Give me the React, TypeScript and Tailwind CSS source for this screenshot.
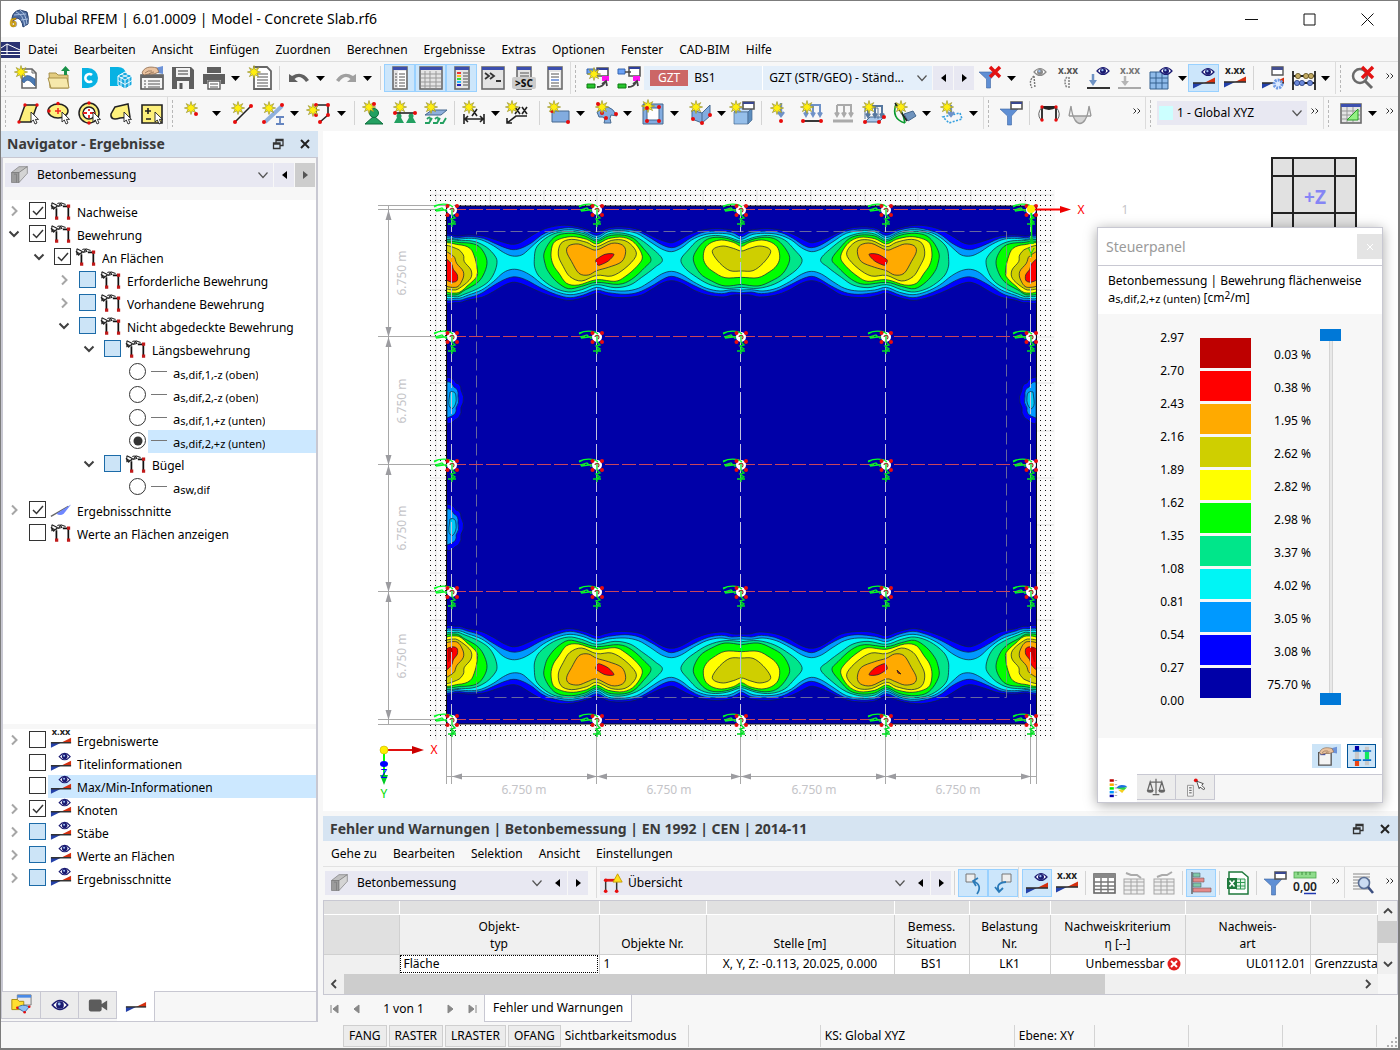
import { ReactNode } from 'react';
import { clsx } from 'clsx';

/* ---------- icon parts ---------- */

const Star = ({ x = 6, y = 6 }) => (
  <path
    transform={`translate(${x} ${y})`}
    d="M0-6.5 1.2-2.4 4.8-4.4 2.8-1 6.6 0 2.8 1.2 4.6 4.6 1.2 2.8 0 6.5-1.2 2.8-4.6 4.6-2.8 1.2-6.6 0-2.8-1-4.8-4.4-1.2-2.4Z"
    fill="#ffee10"
    stroke="#9a9430"
    strokeWidth=".7"
  />
);

const Dot = ({ x, y, r = 2 }: { x: number; y: number; r?: number }) => (
  <circle cx={x} cy={y} r={r} fill="#e80c0c" />
);

const Cursor = ({ x = 15, y = 11 }) => (
  <path
    transform={`translate(${x} ${y})`}
    d="M0 0V10L2.3 8 4 12 6 11 4.4 7.4H7.5Z"
    fill="#fff"
    stroke="#222"
    strokeWidth=".9"
  />
);

const Eye = ({ x = 13, y = 5, color = '#1b1b72' }) => (
  <g transform={`translate(${x} ${y})`}>
    <path d="M-6 0Q0-7 6 0Q0 7-6 0Z" fill="#fff" stroke={color} strokeWidth="1.2" />
    <circle r="3" fill={color} />
    <circle cx="-.6" cy="-.8" r="1.1" fill="#9dc3f5" />
  </g>
);

const Wedge = ({ y = 0 }) => (
  <g transform={`translate(0 ${y})`}>
    <path d="M1 13H12L1 18.5Z" fill="#2340a8" />
    <path d="M23 7.5V13H12Z" fill="#d4300f" />
    <path d="M1 13H23" stroke="#333" strokeWidth="1.6" />
  </g>
);

const Values = ({ color = '#222', y = 8 }) => (
  <text x="12" y={y} textAnchor="middle" fontSize="10" fontWeight="700" fontFamily="Noto Sans, sans-serif" fill={color}>
    x.xx
  </text>
);

const Win = ({ x = 4, y = 1, w = 16, h = 22 }) => (
  <g>
    <rect x={x} y={y} width={w} height={h} fill="#e4e4e4" stroke="#6b6b6b" strokeWidth="1.6" />
    <rect x={x} y={y} width={w} height="3" fill="#3c4fae" />
  </g>
);

const Funnel = () => (
  <path d="M1 6H19L12.5 13V22H8.5V13Z" fill="#5f8fd4" stroke="#3d64a3" strokeWidth=".6" />
);

const Loads = ({ color = '#6f92c8', y = 0 }) => (
  <path
    transform={`translate(0 ${y})`}
    d="M6 4H21M6 4V14M13 4V14M20 4V14M4 11.5 6 15 8 11.5M11 11.5 13 15 15 11.5M18 11.5 20 15 22 11.5"
    fill="none"
    stroke={color}
    strokeWidth="2"
  />
);

const Lines = ({ x, y, w, n, color = '#555', gap = 3 }: { x: number; y: number; w: number; n: number; color?: string; gap?: number }) => (
  <path
    d={Array.from({ length: n }, (_, i) => `M${x} ${y + i * gap}h${w}`).join('')}
    stroke={color}
    strokeWidth="1.2"
  />
);

const Hand = ({ x = 0, y = 0 }) => (
  <g transform={`translate(${x} ${y})`}>
    <path d="M15 2 23 0V8L18 7Z" fill="#6d93d8" />
    <path d="M2 7C4 1 10 0 17 2L19 6Q14 9 9 8L4 9Z" fill="#eac3a0" stroke="#8c6b50" strokeWidth=".8" />
    <path d="M5 7Q8 4 12 5M9 8Q11 6 14 6" fill="none" stroke="#8c6b50" strokeWidth=".8" />
  </g>
);

const DimGrid = () => (
  <g stroke="#a5a5a5" fill="#efefef">
    <rect x="2" y="8" width="20" height="15" />
    <path d="M2 11H22M2 15H22M2 19H22M9 8V23M15 8V23" />
  </g>
);

const icons: Record<string, ReactNode> = {
  newModel: (
    <>
      <path d="M6 3H16L20 7V22H6Z" fill="#fff" stroke="#666" strokeWidth="1.6" />
      <path d="M16 3V7H20" fill="none" stroke="#666" />
      <path d="M6 15Q8 8 14 10L19 13V20L15 16Q11 12 8 17Z" fill="#4a7bb5" stroke="#2c5387" strokeWidth=".6" />
      <Star x={5} y={6} />
    </>
  ),
  open: (
    <>
      <path d="M2 7H9L11 9H21V22H3Z" fill="#e3cc80" stroke="#a8914a" />
      <path d="M1 12H20L22 22H4Z" fill="#f6e8ab" stroke="#a8914a" />
      <path d="M17 9V5H14L18.5 0 23 5H20V9Z" fill="#189048" />
    </>
  ),
  dlubal: (
    <>
      <path d="M4 2H10A10 10 0 0 1 10 22H4Z" fill="#08b2e3" />
      <path d="M14 9A4 4 0 1 0 14 15" fill="none" stroke="#fff" strokeWidth="2.6" />
    </>
  ),
  cloudModel: (
    <>
      <path d="M1 1H9Q16 1 17 8L12 20H1Z" fill="#08b2e3" />
      <path d="M9 10 16 6 23 10V19L16 23 9 19Z" fill="#19a9df" stroke="#fff" />
      <path d="M9 10 16 14 23 10M16 14V23M12 8 20 12V21M20 8 12 12V21M9 14.5 16 18.5 23 14.5" stroke="#fff" fill="none" strokeWidth=".9" />
    </>
  ),
  manager: (
    <>
      <path d="M1 9H23V23H1Z" fill="#f5f5f5" stroke="#555" strokeWidth="1.6" />
      <path d="M1 9H23V12H1Z" fill="#666" />
      <Lines x={8} y={15} w={12} n={3} />
      <Lines x={4} y={15} w={2} n={3} />
      <Hand />
    </>
  ),
  save: (
    <>
      <path d="M1 1H20L23 4V23H1Z" fill="#5f5f5f" />
      <path d="M5 2H19V11H5ZM6 15H18V23H6Z" fill="#f2f2f2" />
      <path d="M7 5H17M7 8H17" stroke="#777" strokeWidth="1.4" />
      <path d="M10 17V23" stroke="#555" strokeWidth="3" />
    </>
  ),
  print: (
    <>
      <path d="M5 1H19V7H5ZM1 8H23V18H19V14H5V18H1Z" fill="#5f5f5f" />
      <path d="M6 15H18V23H6Z" fill="#fff" stroke="#5f5f5f" strokeWidth="1.4" />
      <Lines x={8} y={18} w={8} n={2} />
    </>
  ),
  report: (
    <>
      <path d="M5 1H18L22 5V23H5Z" fill="#fff" stroke="#666" strokeWidth="1.8" />
      <Lines x={8} y={8} w={11} n={5} />
      <Star x={5} y={6} />
    </>
  ),
  undo: <path d="M2 8V16H11L7.5 13Q13 8 19 16L22 14Q15 4 5 10Z" fill="#606060" />,
  redo: <path d="M22 8V16H13L16.5 13Q11 8 5 16L2 14Q9 4 19 10Z" fill="#a0a0a0" />,
  panelList: (
    <>
      <Win x={5} w={14} />
      <rect x="10" y="5" width="8" height="17" fill="#fff" />
      <Lines x={11} y={8} w={6} n={5} />
      <Lines x={7} y={8} w={2} n={5} />
    </>
  ),
  panelTable: (
    <>
      <Win x={1} w={22} />
      <path d="M2 8H22M2 12H22M2 16H22M2 20H22M6 5V22M11 5V22M17 5V22" stroke="#999" />
    </>
  ),
  panelColors: (
    <>
      <Win x={5} w={14} />
      <path d="M7 7H11" stroke="#e33" strokeWidth="2" />
      <path d="M7 10H11" stroke="#fb2" strokeWidth="2" />
      <path d="M7 13H11" stroke="#3d3" strokeWidth="2" />
      <path d="M7 16H11" stroke="#2bf" strokeWidth="2" />
      <path d="M7 19H11" stroke="#22b" strokeWidth="2" />
      <Lines x={13} y={7} w={5} n={5} />
    </>
  ),
  console: (
    <>
      <Win x={1} w={22} />
      <path d="M4 7 8 10 4 13M9 7 13 10 9 13M15 15H20" fill="none" stroke="#333" strokeWidth="1.8" />
    </>
  ),
  script: (
    <>
      <Win x={5} w={14} />
      <Lines x={8} y={7} w={9} n={2} />
      <rect x="0" y="11" width="24" height="12" rx="2" fill="#ccc" />
      <text x="12" y="21" textAnchor="middle" fontSize="10" fontWeight="800" fontFamily="Noto Sans, sans-serif" fill="#111">
        &gt;SC
      </text>
    </>
  ),
  panelDoc: (
    <>
      <Win x={5} w={14} />
      <rect x="7" y="6" width="10" height="15" fill="#fff" />
      <Lines x={8} y={8} w={8} n={2} />
      <Lines x={8} y={14} w={8} n={1} color="#36c" />
      <Lines x={8} y={17} w={8} n={2} />
    </>
  ),
  lcNew: (
    <>
      <path d="M11 2H22V10H11Z" fill="#fff" stroke="#555" strokeWidth="1.6" />
      <path d="M11 2H22V4H11Z" fill="#2f3f9a" />
      <path d="M1 3H9V8H1Z" fill="#6aa1f5" stroke="#3464b0" />
      <path d="M16 10H23V15H16Z" fill="#ff12ef" />
      <path d="M1 18H9V22H1Z" fill="#26c42b" stroke="#0c7b12" />
      <path d="M11 21Q17 21 19 16M16 18 20 15 21 20" fill="none" stroke="#444" strokeWidth="1.8" />
      <Star x={8} y={8} />
    </>
  ),
  lcEdit: (
    <>
      <path d="M12 1H23V10H12Z" fill="#fff" stroke="#555" strokeWidth="1.6" />
      <path d="M12 1H23V3H12Z" fill="#2f3f9a" />
      <path d="M1 3H8V8H1Z" fill="#6aa1f5" stroke="#3464b0" />
      <path d="M8 6H14" stroke="#444" strokeWidth="1.5" />
      <path d="M16 10H23V15H16Z" fill="#ff12ef" />
      <path d="M1 18H9V22H1Z" fill="#26c42b" stroke="#0c7b12" />
      <path d="M11 21Q17 21 19 16M16 18 20 15 21 20" fill="none" stroke="#444" strokeWidth="1.8" />
    </>
  ),
  filterOff: (
    <>
      <Funnel />
      <path d="M12 1 22 11M22 1 12 11" stroke="#e31212" strokeWidth="3.4" />
    </>
  ),
  eyeDim: (
    <>
      <Eye x={15} y={6} color="#8a8a8a" />
      <path d="M9 10Q3 15 7 22M9 10 10 22" fill="none" stroke="#777" strokeWidth="1.4" strokeDasharray="2 1" />
    </>
  ),
  valDim: (
    <>
      <Values color="#555" />
      <path d="M11 11Q7 15 11 22M13 11V23" fill="none" stroke="#888" strokeWidth="1.6" strokeDasharray="2 1" />
    </>
  ),
  loadEye: (
    <>
      <Eye x={16} y={5} />
      <path d="M6 8V15" stroke="#6f93c4" strokeWidth="2.5" />
      <path d="M2 14H10L6 20Z" fill="#6f93c4" />
      <path d="M0 22H23" stroke="#333" strokeWidth="2" />
    </>
  ),
  loadVal: (
    <>
      <Values color="#777" />
      <path d="M7 10V16" stroke="#b5b5b5" strokeWidth="2.5" />
      <path d="M3 15H11L7 20Z" fill="#b5b5b5" />
      <path d="M0 22H23" stroke="#aaa" strokeWidth="2" />
    </>
  ),
  gridEye: (
    <>
      <path d="M1 6H19V23H1Z" fill="#8fbbea" stroke="#35618f" />
      <path d="M1 12H19M1 17H19M7 6V23M13 6V23" stroke="#35618f" />
      <Eye x={17} y={5} />
    </>
  ),
  resultEye: (
    <>
      <Eye x={16} y={6} />
      <Wedge y={4} />
    </>
  ),
  resultVal: (
    <>
      <Values />
      <Wedge y={3} />
    </>
  ),
  resultGear: (
    <>
      <Wedge y={4} />
      <path d="M11 1H22V9H11Z" fill="#fff" stroke="#555" strokeWidth="1.4" />
      <path d="M11 1H22V4H11Z" fill="#444f90" />
      <circle cx="17" cy="18" r="4" fill="#dceaff" stroke="#6f9be6" strokeWidth="3" strokeDasharray="2 1" />
    </>
  ),
  abacus: (
    <>
      <path d="M1 5V24M23 5V24M1 10H23M1 17H23" stroke="#222" strokeWidth="1.8" />
      <g fill="#c2aa62" stroke="#5a4b1c" strokeWidth=".8">
        <circle cx="6" cy="10" r="2.6" />
        <circle cx="14" cy="10" r="2.6" />
        <circle cx="19" cy="10" r="2.6" />
      </g>
      <g fill="#6a88d8" stroke="#2a3f80" strokeWidth=".8">
        <circle cx="5" cy="17" r="2.6" />
        <circle cx="10" cy="17" r="2.6" />
        <circle cx="18" cy="17" r="2.6" />
      </g>
    </>
  ),
  searchOff: (
    <>
      <circle cx="9" cy="10" r="7" fill="none" stroke="#6a6a6a" strokeWidth="2.5" />
      <path d="M14 15 21 22" stroke="#6a6a6a" strokeWidth="3" />
      <path d="M11 1 22 12M22 1 11 12" stroke="#e31212" strokeWidth="3.4" />
    </>
  ),
  selRect: (
    <>
      <path d="M9 4H21L15 21H3Z" fill="#fdf07c" stroke="#222" strokeWidth="1.5" />
      <Dot x={9} y={4} r={1.7} />
      <Dot x={21} y={4} r={1.7} />
      <Dot x={3} y={21} r={1.7} />
      <Cursor />
    </>
  ),
  selEllipse: (
    <>
      <ellipse cx="11" cy="10" rx="10" ry="7" fill="#fdf07c" stroke="#222" strokeWidth="1.5" />
      <Dot x={11} y={2.5} r={1.7} />
      <Dot x={2} y={10} r={1.7} />
      <path d="M8 10H14M11 7V13" stroke="#e22" strokeWidth="1.5" />
      <Cursor />
    </>
  ),
  selRing: (
    <>
      <circle cx="11" cy="12" r="10" fill="#fdf07c" stroke="#222" strokeWidth="1.5" />
      <circle cx="11" cy="12" r="6" fill="#fff" stroke="#222" strokeWidth="1.5" />
      <path d="M5 12H9M12 12H17M11 8V10M11 14V17" stroke="#e22" strokeWidth="1.8" />
      <Dot x={11} y={2} r={1.7} />
      <Dot x={11} y={22} r={1.7} />
      <Cursor />
    </>
  ),
  selPoly: (
    <>
      <path d="M6 6 19 3 21 16 11 17Q1 20 2 13Z" fill="#fdf07c" stroke="#222" strokeWidth="1.5" />
      <Cursor />
    </>
  ),
  selPlus: (
    <>
      <path d="M2 4H22V22H2Z" fill="#fdf07c" stroke="#222" strokeWidth="1.6" />
      <path d="M5 10H11M8 7V13M6 18H11" stroke="#222" strokeWidth="1.6" />
      <Cursor />
    </>
  ),
  node: (
    <>
      <Star x={8} y={7} />
      <Dot x={13} y={13} />
    </>
  ),
  line: (
    <>
      <path d="M5 21 21 5" stroke="#222" strokeWidth="1.6" />
      <Dot x={5} y={21} />
      <Dot x={21} y={5} />
      <Star x={8} y={7} />
    </>
  ),
  member: (
    <>
      <path d="M4 21 21 5" stroke="#8fb0dd" strokeWidth="4" />
      <Dot x={3} y={21} />
      <Dot x={21} y={4} />
      <path d="M15 16H23M15 23H23M19 16V23" stroke="#6585c0" strokeWidth="1.8" />
      <Star x={8} y={7} />
    </>
  ),
  polyline: (
    <>
      <path d="M8 14V4H20V14L12 21" fill="none" stroke="#222" strokeWidth="1.6" />
      <Dot x={8} y={4} />
      <Dot x={20} y={4} />
      <Dot x={8} y={14} />
      <Dot x={20} y={14} />
      <Dot x={12} y={21} />
      <Star x={5} y={9} />
    </>
  ),
  support: (
    <>
      <path d="M12 15 21 23H3Z" fill="#23a061" stroke="#0d6e3c" />
      <circle cx="12" cy="12" r="4.5" fill="#23a061" stroke="#0d6e3c" />
      <Star x={7} y={6} />
      <Dot x={12} y={3} />
    </>
  ),
  lineSupport: (
    <>
      <path d="M6 13 11 22H1ZM18 13 23 22H13Z" fill="#23a061" />
      <circle cx="6" cy="15" r="2.5" fill="#23a061" />
      <circle cx="18" cy="15" r="2.5" fill="#23a061" />
      <Star x={7} y={6} />
      <path d="M1 12H23" stroke="#222" strokeWidth="1.6" />
      <Dot x={2} y={12} />
      <Dot x={22} y={12} />
    </>
  ),
  surfSupport: (
    <>
      <path d="M1 22H5L8 17M9 22H13L16 17M16 22H19L22 17M3 18Q7 14 6 20M11 18Q15 14 14 20" fill="none" stroke="#23a061" strokeWidth="1.8" />
      <path d="M1 14 8 9H23L17 14Z" fill="#8fb0dd" stroke="#46698f" />
      <Star x={7} y={6} />
    </>
  ),
  dimension: (
    <>
      <path d="M2 13V23M22 13V23M3 18H21M6 15 3 18 6 21M18 15 21 18 18 21M10 8 15 15M15 8 10 15" fill="none" stroke="#222" strokeWidth="1.6" />
      <Star x={7} y={6} />
    </>
  ),
  slope: (
    <>
      <path d="M22 15H11L2 22M2 17V22H7M10 6 15 13M15 6 10 13M17 6 22 13M22 6 17 13" fill="none" stroke="#222" strokeWidth="1.6" />
      <Star x={7} y={6} />
    </>
  ),
  surface: (
    <>
      <path d="M5 10H22V21H5Z" fill="#82ace0" stroke="#46698f" />
      <Dot x={5} y={10} />
      <Dot x={21} y={21} />
      <Star x={7} y={6} />
    </>
  ),
  curved: (
    <>
      <path d="M3 11Q15-1 23 15L17 14Q15 17 17 22H10Q13 15 5 16Z" fill="#82ace0" stroke="#46698f" />
      <Dot x={8} y={12} />
      <Dot x={22} y={13} />
      <Dot x={12} y={17} />
      <Star x={8} y={6} />
      <Dot x={4} y={3} />
    </>
  ),
  opening: (
    <>
      <path d="M2 3H22V23H2Z" fill="#82ace0" stroke="#46698f" />
      <path d="M6 7H18V19H6Z" fill="#fff" stroke="#46698f" />
      <Star x={7} y={5} />
      <Dot x={6} y={7} />
      <Dot x={18} y={6} />
      <Dot x={6} y={20} />
      <Dot x={18} y={20} />
    </>
  ),
  solid: (
    <>
      <path d="M4 9 14 12 22 4V15L14 22 4 18Z" fill="#82ace0" stroke="#46698f" />
      <path d="M14 12V22" stroke="#46698f" />
      <Dot x={5} y={18} />
      <Dot x={14} y={22} />
      <Dot x={22} y={14} />
      <Star x={8} y={6} />
    </>
  ),
  cube: (
    <>
      <g stroke="#46698f" strokeWidth=".7">
        <path d="M3 11 7 7H21L17 11Z" fill="#c4defa" />
        <path d="M3 11H17V23H3Z" fill="#96bfea" />
        <path d="M17 11 21 7V19L17 23Z" fill="#5d8dbd" />
      </g>
      <path d="M12 1H23V8H12Z" fill="#fff" stroke="#555" strokeWidth="1.6" />
      <path d="M12 1H23V3H12Z" fill="#39478f" />
      <Star x={5} y={6} />
    </>
  ),
  nodeLoad: (
    <>
      <path d="M12 2V14M9 11 12 15 15 11" fill="none" stroke="#6f92c8" strokeWidth="2.4" />
      <Star x={8} y={7} />
      <Dot x={12} y={20} />
    </>
  ),
  lineLoad: (
    <>
      <Loads />
      <path d="M2 20H22" stroke="#222" strokeWidth="1.8" />
      <Dot x={3} y={20} />
      <Dot x={21} y={20} />
      <Star x={7} y={6} />
    </>
  ),
  lineLoadDim: (
    <>
      <Loads color="#aaa" />
      <path d="M2 20H22" stroke="#aaa" strokeWidth="3" />
    </>
  ),
  surfLoad: (
    <>
      <path d="M3 21 8 16H22L17 21Z" fill="#a9c8ec" stroke="#46698f" />
      <Loads y={1} color="#56779f" />
      <path d="M3 7V18M3 7H16V18" fill="none" stroke="#56779f" />
      <Dot x={3} y={21} />
      <Dot x={17} y={21} />
      <Dot x={22} y={16} />
      <Star x={7} y={6} />
    </>
  ),
  section: (
    <>
      <path d="M3 3Q-2 18 12 22M3 3Q10 10 12 22" fill="none" stroke="#0a9a2d" strokeWidth="1.7" />
      <path d="M11 13 20 10 23 15 15 20Z" fill="#6f93bd" stroke="#46698f" />
      <path d="M2 2 14 20" stroke="#222" strokeWidth="1.6" />
      <Star x={8} y={6} />
    </>
  ),
  freeLoad: (
    <>
      <path d="M3 16 20 12 22 18 9 22Z" fill="none" stroke="#35a0e0" strokeWidth="1.6" strokeDasharray="2 1.5" />
      <path d="M11 4V14M8 11 11 15 14 11" fill="none" stroke="#6f92c8" strokeWidth="2.2" />
      <Star x={7} y={6} />
    </>
  ),
  filterWin: (
    <>
      <g transform="translate(0 2)">
        <Funnel />
      </g>
      <path d="M12 1H23V8H12Z" fill="#fff" stroke="#555" strokeWidth="1.6" />
      <path d="M12 1H23V3H12Z" fill="#39478f" />
    </>
  ),
  frame: (
    <>
      <path d="M5 19V6H19V19M5 6Q12 10 19 6" fill="none" stroke="#222" strokeWidth="1.8" />
      <path d="M5 6Q-1 13 4 19M19 6Q25 13 20 19" fill="none" stroke="#666" />
      <Dot x={5} y={19} r={1.7} />
      <Dot x={19} y={19} r={1.7} />
      <Dot x={5} y={6} r={1.7} />
      <Dot x={19} y={6} r={1.7} />
    </>
  ),
  moment: (
    <>
      <path d="M4 15H20L16 20 12 23 8 20Z" fill="#d5d5d5" />
      <path d="M1 15H23M3 5Q4 14 7 19Q12 26 17 19Q20 14 21 5M3 5 1 15M21 5 23 15" fill="none" stroke="#999" strokeWidth="1.3" />
    </>
  ),
  tableTri: (
    <>
      <Win x={2} y={3} w={20} h={19} />
      <path d="M3 10H21M3 14H21M3 18H21M8 6V21M14 6V21" stroke="#999" />
      <path d="M8 19 19 8V19Z" fill="#93f283" stroke="#2a9b29" />
    </>
  ),
  jumpOut: (
    <>
      <path d="M5 3H14V11H5Z" fill="#eee" stroke="#777" />
      <path d="M12 10Q22 14 16 23M17 7 12 10 15 15" fill="none" stroke="#2a7ab8" strokeWidth="1.7" />
    </>
  ),
  jumpIn: (
    <>
      <path d="M11 3H20V11H11Z" fill="#eee" stroke="#777" />
      <path d="M15 11Q4 12 8 20M4 16 8 21 12 17" fill="none" stroke="#2a7ab8" strokeWidth="1.8" />
    </>
  ),
  grid: (
    <g>
      <rect x="2" y="3" width="21" height="19" fill="#fff" stroke="#666" strokeWidth="1.6" />
      <rect x="2" y="3" width="21" height="4" fill="#888" />
      <path d="M2 11H23M2 15H23M2 18.5H23M9 7V22M16 7V22" stroke="#777" strokeWidth="1.4" />
    </g>
  ),
  gridDim1: (
    <>
      <DimGrid />
      <path d="M4 2 9 4H15L19 7" fill="none" stroke="#aaa" strokeWidth="2" />
    </>
  ),
  gridDim2: (
    <>
      <DimGrid />
      <path d="M5 6 10 4H15L20 1" fill="none" stroke="#aaa" strokeWidth="2" />
    </>
  ),
  bars: (
    <>
      <path d="M3 1V23" stroke="#444" strokeWidth="1.2" />
      <path d="M4 2H11V6H4Z" fill="#7fc9a9" stroke="#567" strokeWidth=".6" />
      <path d="M4 7H15V11H4ZM4 17H22V21H4Z" fill="#e48a8a" stroke="#755" strokeWidth=".6" />
      <path d="M4 12H12V16H4Z" fill="#7fc9a9" stroke="#567" strokeWidth=".6" />
    </>
  ),
  excel: (
    <>
      <path d="M3 1H16L22 6V23H3Z" fill="#fff" stroke="#1f7a3d" strokeWidth="1.5" />
      <path d="M10 8H19V18H10ZM14.5 8V18M10 11.5H19M10 15H19" fill="#e2f4e6" stroke="#2f9a52" />
      <path d="M1 7H11V18H1Z" fill="#1f7a3d" />
      <path d="M3.5 9.5 8.5 15.5M8.5 9.5 3.5 15.5" stroke="#fff" strokeWidth="1.6" />
    </>
  ),
  decimals: (
    <>
      <rect x="1" y="1" width="22" height="6" fill="#8fdc8c" stroke="#4aa84a" strokeWidth=".8" />
      <path d="M5 1V4M9 1V4M13 1V4M17 1V4" stroke="#2f7b30" strokeWidth=".8" />
      <text x="12" y="20" textAnchor="middle" fontSize="12" fontWeight="600" fontFamily="Noto Sans, sans-serif" fill="#222">
        0,00
      </text>
      <path d="M11 22.5H23" stroke="#2038b0" strokeWidth="1.5" />
    </>
  ),
  find: (
    <>
      <Lines x={2} y={3} w={17} n={6} color="#888" />
      <circle cx="13" cy="12" r="5.5" fill="#cbdcf2" stroke="#5a6f95" strokeWidth="1.6" />
      <path d="M17 16 22 22" stroke="#3c4f80" strokeWidth="2.6" />
    </>
  ),
  beam: (
    <g stroke="#777" strokeWidth=".8">
      <path d="M3 9 12 2H22L13 9Z" fill="#c0c0c0" />
      <path d="M3 9H12V21H3Z" fill="#9b9b9b" />
      <path d="M12 9 22 2V10L12 21Z" fill="#d4d4d4" />
      <path d="M6 11H9V21" fill="none" />
    </g>
  ),
  frameWarn: (
    <>
      <path d="M4 21V9H16V21" fill="none" stroke="#333" strokeWidth="1.6" />
      <path d="M4 9H16" stroke="#e01616" strokeWidth="3" />
      <Dot x={4} y={9} />
      <Dot x={4} y={21} />
      <Dot x={16} y={21} />
      <path d="M17 2 22 11H12Z" fill="#ffe01a" stroke="#c79a00" />
    </>
  ),
  treeFrame: (
    <>
      <path d="M2 3 8 6 4 10 1 6Q6 10 8 7M8 4Q11 2 13 6L9 7 12 3 17 5M2 3V10" fill="none" stroke="#222" strokeWidth="1.1" />
      <path d="M7 9V20M20 8V20M14 7H20" stroke="#111" strokeWidth="1.9" />
      <path d="M18.5 5H22V8.5H18.5ZM5.500 18H9V21.500H5.500ZM18.500 18H22V21.500H18.500Z" fill="#c01919" />
    </>
  ),
  treeSection: (
    <>
      <path d="M1 19 20 8" stroke="#666" strokeWidth="1.5" />
      <path d="M7 16 23 6 15 16Q11 19 7 16Z" fill="#6f87ff" />
    </>
  ),
  treeValues: (
    <>
      <Values y={7} />
      <Wedge y={2} />
    </>
  ),
  treeEye: (
    <>
      <Eye x={16} y={5} />
      <Wedge y={2} />
    </>
  ),
  tabData: (
    <>
      <path d="M8 1H23V12H8Z" fill="#e8e8e8" stroke="#777" />
      <path d="M8 1H23V4H8Z" fill="#4a8ae6" />
      <path d="M2 6H8L10 8H15V17H2Z" fill="#ffdf2f" stroke="#a88708" />
      <path d="M8 15Q13 10 21 14L16 20Z" fill="#8fc0f5" stroke="#3a6ca8" />
      <Dot x={8} y={15} r={1.4} />
      <Dot x={21} y={14} r={1.4} />
      <Dot x={16} y={20} r={1.4} />
    </>
  ),
  tabEye: (
    <g transform="translate(12 12) scale(1.4)">
      <Eye x={0} y={0} />
    </g>
  ),
  tabCamera: <path d="M4 6H14Q16 6 16 8V11L22 7V18L16 14V17Q16 19 14 19H4Q2 19 2 17V8Q2 6 4 6Z" fill="#5c5c5c" />,
  tabResult: <Wedge />,
  panelCopy: (
    <>
      <path d="M2 8H17V23H2Z" fill="#f4f4f4" stroke="#555" strokeWidth="1.6" />
      <path d="M4 8H10V11H4Z" fill="#3c4fae" />
      <Hand x={1} y={1} />
    </>
  ),
  panelRange: (
    <>
      <path d="M6 1V23M18 1V23" stroke="#c8c8c8" strokeWidth="5" />
      <path d="M6 0V6" stroke="#0000a8" strokeWidth="5" />
      <path d="M6 18V24" stroke="#ee4411" strokeWidth="5" />
      <path d="M18 7V16" stroke="#10e860" strokeWidth="5" />
      <path d="M1 6H11M1 17H11M13 6H23M13 17H23" stroke="#0a6fc8" strokeWidth="2" />
    </>
  ),
  panelScale: (
    <>
      <path d="M2 3H7" stroke="#b00" strokeWidth="3" />
      <path d="M2 8H7" stroke="#fa0" strokeWidth="3" />
      <path d="M2 12.500H7" stroke="#0e0" strokeWidth="3" />
      <path d="M2 17H7" stroke="#09f" strokeWidth="3" />
      <path d="M2 21.500H7" stroke="#00a" strokeWidth="3" />
      <path d="M8 3H11M8 8H11M8 12H11M8 17H11M8 21H11" stroke="#999" />
      <path d="M10 12Q14 6 23 10L18 13Z" fill="#1e6fe0" />
      <path d="M10 12 23 11 19 15Z" fill="#32d640" />
      <path d="M12 14 20 14 17 18Z" fill="#f5d020" />
    </>
  ),
  panelBalance: (
    <g fill="none" stroke="#666" strokeWidth="1.5">
      <path d="M12 2V20M8 21H16M5 6H19M5 6 2 16H8ZM19 6 16 16H22Z" />
      <path d="M1 16A4 3 0 0 0 9 16ZM15 16A4 3 0 0 0 23 16Z" fill="#666" stroke="none" />
    </g>
  ),
  panelPick: (
    <>
      <path d="M3 10H10V23H3Z" fill="#f4f4f4" stroke="#888" />
      <Lines x={5} y={13} w={3} n={3} />
      <Dot x={13} y={4} r={2.3} />
      <path d="M14 5 22 8 20 10 24 14 22 15 18 12 17 14Z" fill="#fff" stroke="#333" />
    </>
  ),
};

const Icon = ({ name, className = 'size-6' }: { name: string; className?: string }) => (
  <svg viewBox="0 0 24 24" className={clsx('shrink-0 overflow-visible', className)} aria-hidden="true">
    {icons[name]}
  </svg>
);

const Chevron = () => (
  <svg viewBox="0 0 12 12" className="pointer-events-none size-3 shrink-0" fill="none" stroke="#555" strokeWidth="1.2" aria-hidden="true">
    <path d="M1.5 3.5 6 8.5 10.5 3.5" />
  </svg>
);

/* ---------- toolbar ---------- */

// "|" separator, "/" bar border, ":" grip, "v" drop arrow, "_" small space, "*" active button
function Tools({ items, narrow = false }: { items: string; narrow?: boolean }) {
  return (
    <>
      {items.split(' ').map((item, i) => {
        if (item === '|') return <span key={i} className="mx-[3px] h-6 w-px shrink-0 bg-[#d4d4d4]" />;
        if (item === '/') return <span key={i} className="mr-[3px] w-px shrink-0 self-stretch bg-[#dcdcdc]" />;
        if (item === ':')
          return <span key={i} className="mr-[5px] h-7 w-[3px] shrink-0 bg-[radial-gradient(#b8b8b8_1px,transparent_1px)] bg-[length:3px_5px]" />;
        if (item === '_') return <span key={i} className="w-1 shrink-0" />;
        if (item === 'v')
          return (
            <button key={i} aria-label="Auswahl öffnen" className="flex w-3 shrink-0 items-center justify-center">
              <svg viewBox="0 0 9 5" className="h-[5px] w-[9px]" aria-hidden="true">
                <path d="M0 0H9L4.500 5Z" />
              </svg>
            </button>
          );
        if (item === '>>')
          return (
            <button key={i} aria-label="Mehr" className="flex w-4 shrink-0 items-center justify-center pb-1">
              <svg viewBox="0 0 8 6" className="h-[6px] w-2" fill="none" stroke="#333" aria-hidden="true">
                <path d="M.5.5 3 3 .5 5.5M4.5.5 7 3 4.5 5.5" />
              </svg>
            </button>
          );
        const active = item.startsWith('*');
        const name = active ? item.slice(1) : item;
        return (
          <button
            key={i}
            aria-label={name}
            className={clsx(
              'flex h-7 shrink-0 items-center justify-center border',
              narrow ? 'w-[30px]' : 'w-[31px]',
              active ? 'border-[#99d1ff] bg-[#cce6fb]' : 'border-transparent',
            )}
          >
            <Icon name={name} />
          </button>
        );
      })}
    </>
  );
}

function Stepper({ className, muted = false }: { className?: string; muted?: boolean }) {
  return (
    <div className={clsx('flex h-6 shrink-0 gap-px', className)}>
      <button aria-label="Zurück" className="flex w-5 items-center justify-center bg-[#e8e8f2]">
        <svg viewBox="0 0 5 8" className="h-2 w-[5px]" aria-hidden="true">
          <path d="M5 0V8L0 4Z" />
        </svg>
      </button>
      <button aria-label="Weiter" className={clsx('flex w-5 items-center justify-center', muted ? 'bg-[#cdcdcd]' : 'bg-[#e8e8f2]')}>
        <svg viewBox="0 0 5 8" className={clsx('h-2 w-[5px]', muted && 'fill-[#555]')} aria-hidden="true">
          <path d="M0 0V8L5 4Z" />
        </svg>
      </button>
    </div>
  );
}

function Combo({ label, value, icon, className }: { label: string; value: string; icon?: ReactNode; className?: string }) {
  return (
    <label className={clsx('flex h-6 items-center bg-[#e8e8f2] pr-1', className)}>
      {icon}
      <select aria-label={label} className="min-w-0 flex-1 appearance-none bg-transparent px-1 outline-none">
        <option>{value}</option>
      </select>
      <Chevron />
    </label>
  );
}

const DockButtons = () => (
  <div className="ml-auto flex items-center gap-4 pr-2">
    <button aria-label="Abdocken">
      <svg viewBox="0 0 12 12" className="size-3" fill="none" stroke="#333" strokeWidth="1.3" aria-hidden="true">
        <path d="M4 5V1.5H11V7.5H8M4 2.5H11M1.5 5H8V10.5H1.5ZM1.5 6H8" />
      </svg>
    </button>
    <button aria-label="Schließen">
      <svg viewBox="0 0 10 10" className="size-2.5" stroke="#222" strokeWidth="2" aria-hidden="true">
        <path d="M1 1 9 9M9 1 1 9" />
      </svg>
    </button>
  </div>
);

/* ---------- navigator ---------- */

type Row = {
  level?: number;
  open?: boolean;
  box: 'on' | 'off' | 'part' | 'radio' | 'radioOn';
  icon?: string;
  label: ReactNode;
  selected?: boolean;
};

const sub = (base: string, index: string, tail = '') => (
  <>
    <span className="text-[13px]">{base}</span>
    <span className="relative top-px text-[11px]">
      {index}
      {tail}
    </span>
  </>
);

const resultRows: Row[] = [
  { open: false, box: 'on', icon: 'treeFrame', label: 'Nachweise' },
  { open: true, box: 'on', icon: 'treeFrame', label: 'Bewehrung' },
  { level: 1, open: true, box: 'on', icon: 'treeFrame', label: 'An Flächen' },
  { level: 2, open: false, box: 'part', icon: 'treeFrame', label: 'Erforderliche Bewehrung' },
  { level: 2, open: false, box: 'part', icon: 'treeFrame', label: 'Vorhandene Bewehrung' },
  { level: 2, open: true, box: 'part', icon: 'treeFrame', label: 'Nicht abgedeckte Bewehrung' },
  { level: 3, open: true, box: 'part', icon: 'treeFrame', label: 'Längsbewehrung' },
  { level: 4, box: 'radio', label: sub('a', 's,dif,1,-z', ' (oben)') },
  { level: 4, box: 'radio', label: sub('a', 's,dif,2,-z', ' (oben)') },
  { level: 4, box: 'radio', label: sub('a', 's,dif,1,+z', ' (unten)') },
  { level: 4, box: 'radioOn', label: sub('a', 's,dif,2,+z', ' (unten)'), selected: true },
  { level: 3, open: true, box: 'part', icon: 'treeFrame', label: 'Bügel' },
  { level: 4, box: 'radio', label: sub('a', 'sw,dif') },
  { open: false, box: 'on', icon: 'treeSection', label: 'Ergebnisschnitte' },
  { box: 'off', icon: 'treeFrame', label: 'Werte an Flächen anzeigen' },
];

const displayRows: Row[] = [
  { open: false, box: 'off', icon: 'treeValues', label: 'Ergebniswerte' },
  { box: 'off', icon: 'treeEye', label: 'Titelinformationen' },
  { box: 'off', icon: 'treeEye', label: 'Max/Min-Informationen', selected: true },
  { open: false, box: 'on', icon: 'treeEye', label: 'Knoten' },
  { open: false, box: 'part', icon: 'treeEye', label: 'Stäbe' },
  { open: false, box: 'part', icon: 'treeEye', label: 'Werte an Flächen' },
  { open: false, box: 'part', icon: 'treeEye', label: 'Ergebnisschnitte' },
];

const indents = ['pl-[5px]', 'pl-[30px]', 'pl-[55px]', 'pl-[80px]', 'pl-[105px]'];

function TreeRow({ row, id }: { row: Row; id: string }) {
  const radio = row.box === 'radio' || row.box === 'radioOn';
  return (
    <li className={clsx('flex h-[23px] items-stretch', indents[row.level ?? 0])}>
      <button
        aria-label={row.open ? 'Zuklappen' : 'Aufklappen'}
        className={clsx('flex w-[21px] shrink-0 items-center pb-px', row.open === undefined && 'invisible')}
      >
        <svg viewBox="0 0 12 12" className="size-3" fill="none" strokeWidth="2" aria-hidden="true">
          {row.open ? <path d="M1.5 3.5 6 8 10.5 3.5" stroke="#404040" /> : <path d="M4 1.5 8.5 6 4 10.5" stroke="#a6a6a6" />}
        </svg>
      </button>
      <span className="grid shrink-0 place-items-center pb-0.5">
        <input
          id={id}
          type={radio ? 'radio' : 'checkbox'}
          name={radio ? 'result' : undefined}
          defaultChecked={row.box === 'on' || row.box === 'radioOn'}
          className={clsx(
            'peer col-start-1 row-start-1 size-[17px] appearance-none border',
            radio && 'rounded-full',
            row.box === 'part' ? 'border-[#1c6ba8] bg-[#cce4f7]' : 'border-[#333] bg-white',
          )}
        />
        <svg
          viewBox="0 0 16 16"
          className="pointer-events-none invisible col-start-1 row-start-1 size-4 peer-checked:visible"
          fill="none"
          stroke="#333"
          strokeWidth="1.5"
          aria-hidden="true"
        >
          {radio ? <circle cx="8" cy="8" r="4.5" fill="#333" stroke="none" /> : <path d="M3 8 6.5 11.5 13 4" />}
        </svg>
      </span>
      <label htmlFor={id} className={clsx('ml-0.5 flex min-w-0 flex-1 items-center gap-1 pl-px', row.selected && 'bg-[#cce8ff]')}>
        {row.icon ? <Icon name={row.icon} className="mx-px -mt-0.5 size-[22px]" /> : <span className="mx-0.5 mb-0.5 w-4 border-t border-[#777]" />}
        <span className="truncate pt-0.5">{row.label}</span>
      </label>
    </li>
  );
}

function Navigator() {
  return (
    <aside className="mr-[5px] flex w-[317px] shrink-0 flex-col">
      <header className="flex h-[26px] items-center bg-[#d6e4f2] pl-1.5 text-sm font-bold text-[#3a3a3a]">
        Navigator - Ergebnisse
        <DockButtons />
      </header>
      <div className="flex min-h-0 flex-1 flex-col border-x-2 border-t border-[#c8c8d2]">
        <div className="flex py-[5px] pl-0.5 pr-px">
          <Combo label="Bemessung" value="Betonbemessung" icon={<Icon name="beam" className="mx-1 size-5" />} className="mr-px flex-1" />
          <Stepper muted />
        </div>
        <ul className="mt-2 min-h-0 flex-1 overflow-hidden bg-white">
          {resultRows.map((row, i) => (
            <TreeRow key={i} row={row} id={`result-${i}`} />
          ))}
        </ul>
        <ul className="mt-[5px] h-[262px] shrink-0 bg-white">
          {displayRows.map((row, i) => (
            <TreeRow key={i} row={row} id={`display-${i}`} />
          ))}
        </ul>
      </div>
      <nav className="flex h-[31px] shrink-0 border-b border-r-2 border-[#c8c8d2]">
        {['tabData', 'tabEye', 'tabCamera', 'tabResult'].map((tab, i) => (
          <button
            key={tab}
            aria-label={tab}
            className={clsx(
              'flex items-center justify-center border-r border-[#c8c8d2]',
              i === 0 ? 'w-10 border-l' : 'w-[38px]',
              i === 3 ? 'bg-white' : 'mb-0.5 border-y bg-[#ececec]',
            )}
          >
            <Icon name={tab} className="size-[22px]" />
          </button>
        ))}
        <span className="flex-1 border-t border-[#c8c8d2]" />
      </nav>
    </aside>
  );
}

/* ---------- model view ---------- */

// Isoline points of one quadrant, in thirds of a pixel
const isolines: { fill: string; rings: string[] }[] = [
  {
    fill: '#0000ff',
    rings: [
      '50,178 100,168 140,165 175,168 205,177 235,187 262,193 285,188 310,173 340,155 370,143 410,136 445,138 480,146 515,158 550,144 590,141 630,146 665,160 695,175 725,186 742,188 760,181 790,165 825,152 870,146 920,150 949,160 970,152 970,345 949,345 925,345 895,351 850,346 810,332 770,310 740,302 712,309 680,328 650,345 610,352 570,352 540,346 515,340 480,352 435,361 395,354 350,338 310,320 285,310 262,307 235,317 205,335 170,352 130,360 95,368 50,350',
    ],
  },
  {
    fill: '#0099ff',
    rings: [
      '50,183 100,173 140,170 175,175 205,188 240,203 265,209 290,204 320,188 350,165 380,152 430,143 475,150 515,166 550,150 590,147 635,153 670,170 710,194 740,203 765,195 795,175 830,158 870,153 920,157 949,170 970,160 970,338 949,338 920,336 890,341 850,335 810,318 770,298 740,289 715,297 680,318 640,337 600,343 550,338 515,331 475,345 435,353 395,344 350,325 310,303 285,293 262,291 235,300 200,320 165,342 130,353 95,361 50,343',
    ],
  },
  {
    fill: '#00f5f5',
    rings: [
      '50,188 100,178 140,175 170,180 205,197 235,217 262,228 290,225 315,205 345,178 380,158 430,149 475,156 515,173 550,155 590,152 635,160 675,185 710,207 740,215 770,203 800,180 835,165 870,160 915,163 949,178 970,170 970,330 949,330 920,329 885,333 845,325 805,305 770,283 740,274 710,282 675,305 640,325 600,333 550,330 515,322 475,337 435,344 395,335 355,315 320,288 290,272 262,268 235,278 205,305 170,330 130,345 95,355 50,338',
    ],
  },
  {
    fill: '#00e68a',
    rings: [
      '50,192 110,182 150,185 185,202 210,228 216,248 208,278 190,305 160,325 120,342 90,350 50,330',
      '328,238 333,205 355,180 390,160 435,154 480,162 515,179 550,162 590,159 635,172 675,200 712,238 690,262 650,292 615,315 570,323 515,314 470,329 430,336 385,322 345,292 330,265',
      '768,238 790,210 820,180 860,167 905,170 949,184 970,176 970,321 949,322 900,325 850,312 805,285 778,262',
    ],
  },
  {
    fill: '#00ff00',
    rings: [
      '50,196 110,188 155,195 178,220 186,250 175,285 155,310 120,330 90,345 50,325',
      '360,250 357,220 375,185 400,165 440,160 480,168 515,184 550,168 590,165 625,175 655,205 678,238 660,262 620,298 580,313 515,307 470,319 430,326 395,305 370,275',
      '805,240 815,210 840,182 870,172 910,176 949,190 970,184 970,313 949,313 900,318 860,303 825,280',
    ],
  },
  {
    fill: '#ffff00',
    rings: [
      '50,199 100,194 135,205 150,235 157,270 155,290 130,315 95,339 50,318',
      '378,225 385,190 410,175 445,170 485,178 515,192 550,176 595,172 630,190 652,230 635,260 600,290 570,304 515,299 460,315 425,310 402,280 385,255',
      '835,235 840,205 860,187 890,180 925,187 949,199 970,190 970,292 949,292 900,293 865,275 845,258',
    ],
  },
  {
    fill: '#cfcf00',
    rings: [
      '50,204 95,206 115,225 118,245 138,270 137,295 110,320 85,330 50,310',
      '400,225 408,190 440,178 485,187 515,200 560,181 600,182 628,205 632,230 600,265 560,288 515,286 470,303 435,290 415,260',
      '863,220 868,205 895,198 925,205 949,213 970,206 970,273 949,273 915,272 885,250',
    ],
  },
  {
    fill: '#ffaa00',
    rings: [
      '50,218 85,228 95,250 115,275 112,300 92,322 50,305',
      '425,215 432,197 460,192 490,203 515,210 560,190 592,195 602,215 590,245 550,262 515,272 490,285 462,280 440,245',
    ],
  },
  {
    fill: '#ff0000',
    rings: ['50,230 78,250 85,268 97,285 95,303 75,305 50,285', '512,242 520,234 540,223 562,221 566,226 550,243 528,254 518,255'],
  },
];

function smooth(ring: string) {
  const p = ring.split(' ').map((pair) => pair.split(',').map(Number));
  const n = p.length;
  let d = `M${p[0][0]} ${p[0][1]}`;
  for (let i = 0; i < n; i++) {
    const a = p[(i - 1 + n) % n];
    const b = p[i];
    const c = p[(i + 1) % n];
    const e = p[(i + 2) % n];
    d += `C${b[0] + (c[0] - a[0]) / 6} ${b[1] + (c[1] - a[1]) / 6} ${c[0] - (e[0] - b[0]) / 6} ${c[1] - (e[1] - b[1]) / 6} ${c[0]} ${c[1]}`;
  }
  return d + 'Z';
}

const Quadrant = () => (
  <g clipPath="url(#quadrant)">
    <g transform="translate(425 180) scale(.33333)">
      {isolines.map(({ fill, rings }) =>
        rings.map((ring) => <path key={ring} d={smooth(ring)} fill={fill} stroke="#10233a" strokeWidth="2.2" />),
      )}
    </g>
  </g>
);

const EdgeSpot = () => (
  <g stroke="#10233a" strokeWidth=".7">
    <path d="M447 377Q454 378 456 383Q461 384 461 390Q465 397 463 403Q460 407 461 413Q459 419 455 420Q450 425 447 423Z" fill="#0000ff" />
    <path d="M447 382Q451 381 454 387Q459 389 458 396Q460 403 456 408Q457 414 452 416L447 418Z" fill="#0099ff" />
    <path d="M450 392Q456 390 456 397Q457 405 452 409Q448 407 449 400Z" fill="#00c8f5" />
  </g>
);

const xs = [452, 597, 741, 886, 1031];
const ys = [210, 337, 465, 592, 720];

const NodeMark = ({ x, y }: { x: number; y: number }) => (
  <g transform={`translate(${x} ${y})`}>
    <circle r="5" fill="#fff" />
    <path d="M-18-4Q-10-7-2-5L1-3M-17 0-10-2-8 0-16 1M-18-3-14-5M-6-1V2" fill="none" stroke="#0f2" strokeWidth="1.3" />
    <path d="M0-2V5L3 8-1 9 3 12-1 14M-4 14H4M0 9V17" fill="none" stroke="#0d2" strokeWidth="1.3" />
    <path d="M-2 0A2 2 0 1 1 1 2" fill="none" stroke="#932" strokeWidth="1.2" />
    <Dot x={-4.5} y={-4} />
    <Dot x={5} y={-4} />
    <Dot x={-4.5} y={5} />
    <Dot x={5} y={5} />
  </g>
);

function ModelView() {
  return (
    <svg viewBox="323 131 1075 680" className="block size-full" role="img" aria-label="Ergebnisse der Betonplatte" fontFamily="Noto Sans, sans-serif">
      <defs>
        <pattern id="raster" x="430" y="190" width="5" height="5" patternUnits="userSpaceOnUse">
          <rect width="1" height="1" fill="#111" shapeRendering="crispEdges" />
        </pattern>
        <clipPath id="quadrant">
          <rect x="447" y="206" width="294.5" height="120" />
        </clipPath>
      </defs>

      <rect x="430" y="190" width="625" height="550" fill="#fafafa" />
      <path
        d={[436, 490, 544, 597, 650, 703, 757, 811, 865, 918, 971, 1025].map((x) => `M${x} 190V740`).join('') +
          [195, 242, 290, 337, 383, 431, 478, 525, 573, 620, 668, 715].map((y) => `M430 ${y}H1054`).join('')}
        stroke="#e3e3e3"
      />
      <rect x="430" y="190" width="625" height="550" fill="url(#raster)" />
      <rect x="446.5" y="206" width="590" height="518" fill="#0000a8" stroke="#111" />

      <Quadrant />
      <g transform="matrix(-1 0 0 1 1483 0)">
        <Quadrant />
      </g>
      <g transform="matrix(1 0 0 -1 0 929)">
        <Quadrant />
      </g>
      <g transform="matrix(-1 0 0 -1 1483 929)">
        <Quadrant />
      </g>
      <path d="M448 648 452 647 453 652 449 662H448ZM1035 648 1031 647 1031 652 1034 662H1035Z" fill="#be0000" />
      <path d="M897 670 901 674 898 673Z" fill="#f00" stroke="#222" strokeWidth=".8" />
      <EdgeSpot />
      <g transform="translate(0 127)">
        <EdgeSpot />
      </g>
      <g transform="matrix(-1 0 0 1 1483 0)">
        <EdgeSpot />
      </g>

      <rect x="476.5" y="231.5" width="530" height="466" fill="none" stroke="#8a8a9c" strokeDasharray="12 5" opacity=".75" />
      {ys.map((y) => (
        <path key={y} d={`M452 ${y - 0.5}H1031`} stroke="#c8455c" strokeDasharray="14 3" />
      ))}
      {xs.map((x) => (
        <path key={x} d={`M${x - 0.5} 210V720`} stroke="#c3c3de" strokeDasharray="22 4" />
      ))}

      {/* dimension lines */}
      <g stroke="#a9a9a9" strokeWidth="1">
        <path d="M388.5 206V724M378 205.5H446M378 724.5H446" />
        {ys.map((y) => (
          <path key={y} d={`M378 ${y - 0.5}H450`} />
        ))}
        <path d="M446 776.5H1037M446.5 726V784M1036.5 726V784" />
        {xs.map((x) => (
          <path key={x} d={`M${x - 0.5} 726V784`} />
        ))}
      </g>
      <g fill="#9c9ca0">
        {[0, 1, 2, 3].map((i) => (
          <g key={i}>
            <path d={`M388.5 ${ys[i]}l3 10h-6ZM388.5 ${ys[i + 1]}l3-10h-6Z`} />
            <path d={`M${xs[i]} 776.5l10 3v-6ZM${xs[i + 1]} 776.5l-10 3v-6Z`} />
          </g>
        ))}
      </g>
      <g fill="#c4c4c8" fontSize="12" textAnchor="middle">
        {[524, 669, 814, 958].map((x) => (
          <text key={x} x={x} y="794">
            6.750 m
          </text>
        ))}
        {[273, 401, 528, 656].map((y) => (
          <text key={y} transform={`translate(406 ${y}) rotate(-90)`}>
            6.750 m
          </text>
        ))}
        <text x="1125" y="214">
          1
        </text>
      </g>

      {ys.map((y) => xs.map((x) => <NodeMark key={`${x}-${y}`} x={x} y={y} />))}

      {/* axes */}
      <path d="M384 750H412" stroke="#e01010" strokeWidth="2" />
      <path d="M412 746 424 750 412 754Z" fill="#c00" />
      <path d="M384 750V776" stroke="#0f0" strokeWidth="2" />
      <path d="M380 775H388L384 785Z" fill="#0c2" />
      <ellipse cx="384" cy="764" rx="4" ry="3" fill="#00f" />
      <circle cx="384" cy="750" r="4" fill="#ffee00" stroke="#c8b400" strokeWidth=".6" />
      <path d="M1031 209.5H1060" stroke="#f00" strokeWidth="2" />
      <path d="M1060 206 1071 209.5 1060 213Z" fill="#e00" />
      <path d="M1031.5 212V238" stroke="#0f0" strokeWidth="1.5" />
      <path d="M1029 244H1034L1031.5 233Z" fill="#0c2" />
      <circle cx="1031" cy="209" r="4" fill="#ffee00" />
      <g fontSize="12" textAnchor="middle">
        <text x="434" y="754" fill="#f00">X</text>
        <text x="384" y="778" fill="#00f">Z</text>
        <text x="384" y="798" fill="#0d0">Y</text>
        <text x="1081" y="214" fill="#f00">X</text>
        <text x="1031" y="257" fill="#0d0">Y</text>
      </g>

      {/* view cube */}
      <rect x="1272" y="158" width="84" height="90" fill="#e1e1e1" stroke="#222" strokeWidth="2" />
      <path d="M1293 158V248M1335 158V248M1272 176H1356M1272 213H1356" stroke="#222" strokeWidth="2" />
      <text x="1315" y="204" textAnchor="middle" fontSize="19" fontWeight="700" fill="#8585f5">
        +Z
      </text>
    </svg>
  );
}

/* ---------- control panel ---------- */

const legend = [
  ['2.97', 'bg-[#be0000]', '0.03 %'],
  ['2.70', 'bg-[#ff0000]', '0.38 %'],
  ['2.43', 'bg-[#ffaa00]', '1.95 %'],
  ['2.16', 'bg-[#cfcf00]', '2.62 %'],
  ['1.89', 'bg-[#ffff00]', '2.82 %'],
  ['1.62', 'bg-[#00ff00]', '2.98 %'],
  ['1.35', 'bg-[#00e68a]', '3.37 %'],
  ['1.08', 'bg-[#00f5f5]', '4.02 %'],
  ['0.81', 'bg-[#0099ff]', '3.05 %'],
  ['0.54', 'bg-[#0000ff]', '3.08 %'],
  ['0.27', 'bg-[#0000a8]', '75.70 %'],
];

const rangeClass =
  'pointer-events-none col-start-1 row-start-1 h-full w-[21px] appearance-none bg-transparent [writing-mode:vertical-lr] [&::-webkit-slider-thumb]:pointer-events-auto [&::-webkit-slider-thumb]:h-3 [&::-webkit-slider-thumb]:w-[21px] [&::-webkit-slider-thumb]:appearance-none [&::-webkit-slider-thumb]:bg-[#0078d7]';

function ControlPanel() {
  return (
    <section className="absolute right-[15px] top-24 w-[286px] border border-[#c8c8d2] bg-[#f7f7f7] shadow-[0_2px_12px_rgba(0,0,0,0.35)]">
      <header className="flex h-[37px] items-center justify-between bg-white pl-2 text-sm text-[#9a9a9a]">
        Steuerpanel
        <button aria-label="Schließen" className="flex size-[25px] items-center justify-center bg-[#e4e4e4]">
          <svg viewBox="0 0 8 8" className="size-2" stroke="#fff" aria-hidden="true">
            <path d="M1 1 7 7M7 1 1 7" />
          </svg>
        </button>
      </header>
      <div className="h-[49px] border-t border-[#c8c8d2] bg-white pl-2.5 pt-1.5 leading-[17px]">
        <p>Betonbemessung | Bewehrung flächenweise</p>
        <p>
          {sub('a', 's,dif,2,+z', ' (unten)')} [cm<sup className="-top-[3px] text-[10px] leading-none">2</sup>/m]
        </p>
      </div>
      <div className="flex pb-[29px] pt-4">
        <ul className="w-[153px]">
          {legend.map(([value, color]) => (
            <li key={value} className="flex h-[33px] justify-end gap-4">
              <span className="leading-4">{value}</span>
              <span className={clsx('mt-2 h-[30px] w-[51px]', color)} />
            </li>
          ))}
          <li className="pr-[67px] text-right leading-4">0.00</li>
        </ul>
        <ul className="w-[60px] pt-2.5 text-right">
          {legend.map(([value, , share]) => (
            <li key={value} className="h-[33px] leading-[30px]">
              {share}
            </li>
          ))}
        </ul>
        <div className="-mt-px mb-1 ml-[9px] grid w-[21px] justify-items-center self-stretch">
          <span className="col-start-1 row-start-1 w-1 border border-[#d4d4d4] bg-[#e8e8e8]" />
          <input type="range" aria-label="Obergrenze" min={0} max={297} defaultValue={0} className={rangeClass} />
          <input type="range" aria-label="Untergrenze" min={0} max={297} defaultValue={297} className={rangeClass} />
        </div>
      </div>
      <div className="flex h-9 items-center justify-end gap-1.5 bg-white pr-1.5">
        <button aria-label="Kopieren" className="flex h-6 w-[29px] items-center justify-center bg-[#cce4f7]">
          <Icon name="panelCopy" className="size-5" />
        </button>
        <button aria-label="Wertebereich" className="flex h-6 w-[29px] items-center justify-center border border-[#005499] bg-[#cce4f7]">
          <Icon name="panelRange" className="size-5" />
        </button>
      </div>
      <nav className="flex h-7">
        {['panelScale', 'panelBalance', 'panelPick'].map((tab, i) => (
          <button
            key={tab}
            aria-label={tab}
            className={clsx(
              'flex w-[39px] items-center justify-center',
              i === 0 ? 'bg-white' : 'mb-0.5 border border-l-0 border-[#c8c8d2] bg-[#ececec]',
            )}
          >
            <Icon name={tab} className="size-5" />
          </button>
        ))}
        <span className="flex-1 border-t border-[#c8c8d2]" />
      </nav>
    </section>
  );
}

/* ---------- table dock ---------- */

const columns = [
  ['', '', 'w-[75px]'],
  ['Objekt-', 'typ', 'w-[200px]'],
  ['', 'Objekte Nr.', 'w-[107px]'],
  ['', 'Stelle [m]', 'w-[188px]'],
  ['Bemess.', 'Situation', 'w-[75px]'],
  ['Belastung', 'Nr.', 'w-[81px]'],
  ['Nachweiskriterium', 'η [--]', 'w-[135px]'],
  ['Nachweis-', 'art', 'w-[125px]'],
  ['', '', ''],
];

const ScrollArrow = ({ d, label, className }: { d: string; label: string; className?: string }) => (
  <button aria-label={label} className={clsx('flex shrink-0 items-center justify-center bg-[#f0f0f0]', className)}>
    <svg viewBox="0 0 10 10" className="size-2.5" fill="none" stroke="#444" strokeWidth="1.8" aria-hidden="true">
      <path d={d} />
    </svg>
  </button>
);

function TableDock() {
  return (
    <section className="mt-[5px] flex shrink-0 flex-col">
      <header className="flex h-[25px] items-center bg-[#d6e4f2] pl-[7px] text-sm font-bold text-[#3a3a3a]">
        Fehler und Warnungen | Betonbemessung | EN 1992 | CEN | 2014-11
        <DockButtons />
      </header>
      <nav className="flex h-[26px] items-center gap-4 border-b border-[#e2e2e2] pl-2 pt-px">
        {['Gehe zu', 'Bearbeiten', 'Selektion', 'Ansicht', 'Einstellungen'].map((item) => (
          <button key={item}>{item}</button>
        ))}
      </nav>
      <div className="flex h-[33px] items-center pb-0.5 pl-0.5">
        <Combo label="Modul" value="Betonbemessung" icon={<Icon name="beam" className="mx-1 size-5" />} className="w-[222px]" />
        <Stepper className="mr-2" />
        <Tools items="/" />
        <Combo label="Tabelle" value="Übersicht" icon={<Icon name="frameWarn" className="ml-0.5 size-[22px]" />} className="min-w-0 flex-1" />
        <Stepper />
        <Tools narrow items="| *jumpOut *jumpIn / *resultEye resultVal | grid gridDim1 gridDim2 | *bars | excel | filterWin decimals _ _ >> / find _ >>" />
      </div>
      <div className="flex border border-[#c8c8d2]">
        <div className="min-w-0 flex-1">
          <table className="w-full table-fixed border-collapse">
            <thead>
              <tr className="h-[13px] bg-[#e0e0e0]">
                {columns.map(([, , width], i) => (
                  <td key={i} className={clsx('border-b border-r border-white', width)} />
                ))}
              </tr>
              <tr className="h-10 bg-[#f0f0f0]">
                {columns.map(([top, bottom], i) => (
                  <th
                    key={i}
                    className={clsx('whitespace-pre border-b border-r border-[#d0d0d0] p-0 align-bottom font-normal leading-[17px]', i === 0 && 'bg-[#e0e0e0]')}
                  >
                    <div>{top}</div>
                    <div className="pb-0.5">{bottom}</div>
                  </th>
                ))}
              </tr>
            </thead>
            <tbody>
              <tr className="h-5 bg-white [&>td]:whitespace-nowrap [&>td]:border-r [&>td]:border-[#d0d0d0] [&>td]:px-1 [&>td]:py-0">
                <td className="bg-[#f0f0f0]" />
                <td className="outline-1 -outline-offset-2 outline-dotted outline-black">Fläche</td>
                <td>1</td>
                <td className="text-center">X, Y, Z: -0.113, 20.025, 0.000</td>
                <td className="text-center">BS1</td>
                <td className="text-center">LK1</td>
                <td>
                  <span className="flex items-center justify-end gap-0.5">
                    Unbemessbar
                    <svg viewBox="0 0 14 14" className="size-3.5" aria-hidden="true">
                      <circle cx="7" cy="7" r="6.5" fill="#e12020" />
                      <path d="M4 4 10 10M10 4 4 10" stroke="#fff" strokeWidth="2" />
                    </svg>
                  </span>
                </td>
                <td className="text-right">UL0112.01</td>
                <td className="overflow-hidden">Grenzzusta</td>
              </tr>
            </tbody>
          </table>
          <div className="flex h-5">
            <ScrollArrow label="Nach links" d="M7 1 3 5 7 9" className="w-5" />
            <div className="flex-1 bg-[#f0f0f0]">
              <div className="h-full w-3/4 bg-[#cdcdcd]" />
            </div>
            <ScrollArrow label="Nach rechts" d="M3 1 7 5 3 9" className="w-5" />
          </div>
        </div>
        <div className="mb-5 flex w-[19px] shrink-0 flex-col bg-[#f0f0f0]">
          <ScrollArrow label="Nach oben" d="M1 7 5 3 9 7" className="h-5" />
          <span className="h-[22px] bg-[#cdcdcd]" />
          <span className="flex-1" />
          <ScrollArrow label="Nach unten" d="M1 3 5 7 9 3" className="h-5" />
        </div>
      </div>
      <div className="flex h-[27px] items-center">
        <div className="flex w-[161px] items-center justify-between px-1.5">
          {['M2 1V9M9 1V9L4 5Z', 'M7 1V9L2 5Z'].map((d) => (
            <button key={d} aria-label="Vorherige Tabelle">
              <svg viewBox="0 0 10 10" className="size-2.5" fill="#888" stroke="#888" aria-hidden="true">
                <path d={d} />
              </svg>
            </button>
          ))}
          <span className="px-2">1 von 1</span>
          {['M3 1V9L8 5Z', 'M8 1V9M1 1V9L6 5Z'].map((d) => (
            <button key={d} aria-label="Nächste Tabelle">
              <svg viewBox="0 0 10 10" className="size-2.5" fill="#888" stroke="#888" aria-hidden="true">
                <path d={d} />
              </svg>
            </button>
          ))}
        </div>
        <button className="h-full border border-t-0 border-[#c8c8d2] bg-white px-2">Fehler und Warnungen</button>
      </div>
    </section>
  );
}

/* ---------- window ---------- */

const menu = ['Datei', 'Bearbeiten', 'Ansicht', 'Einfügen', 'Zuordnen', 'Berechnen', 'Ergebnisse', 'Extras', 'Optionen', 'Fenster', 'CAD-BIM', 'Hilfe'];

export default function App() {
  return (
    <div className="flex h-screen flex-col overflow-hidden border-b-2 border-l border-r-2 border-t border-[#7c7c7c] bg-[#f7f7f7] font-['Noto_Sans','Open_Sans',sans-serif] text-xs text-black">
      <header className="flex h-9 shrink-0 items-center bg-white pl-2">
        <svg viewBox="0 0 20 20" className="size-5 overflow-visible" aria-hidden="true">
          <path d="M3 9Q4 2 11 1L18 3Q20 8 19 15L14 18Q13 10 8 9L4 12Z" fill="#4b6a9e" stroke="#27406e" />
          <path d="M7 3Q14 5 16 17M11 1Q17 5 18 15M5 6 17 5M12 11 19 10" fill="none" stroke="#a9bfe0" />
          <text x="1" y="18" fontSize="12" fontWeight="800" fill="#e0b018" stroke="#8a6a08" strokeWidth=".5">
            6
          </text>
        </svg>
        <h1 className="pl-1.5 text-sm">Dlubal RFEM | 6.01.0009 | Model - Concrete Slab.rf6</h1>
        <div className="ml-auto flex gap-[45px] pr-6">
          {['M0 6.5H13', 'M1 1H12V12H1Z', 'M.5.5 12.5 12.5M12.5.5.5 12.5'].map((d, i) => (
            <button key={d} aria-label={['Minimieren', 'Maximieren', 'Schließen'][i]}>
              <svg viewBox="0 0 13 13" className="size-[13px]" fill="none" stroke="#111" aria-hidden="true">
                <path d={d} />
              </svg>
            </button>
          ))}
        </div>
      </header>

      <nav className="flex h-6 shrink-0 items-center pt-px">
        <svg viewBox="0 0 19 16" className="mr-2 h-4 w-[19px]" aria-hidden="true">
          <rect width="19" height="16" fill="#2a3272" />
          <path d="M0 6 6 2 19 8M0 9.5H19M6 2V12M0 12.5H19" fill="none" stroke="#fff" />
        </svg>
        <div className="flex gap-4">
          {menu.map((item) => (
            <button key={item}>{item}</button>
          ))}
        </div>
      </nav>

      <div className="flex h-[35px] shrink-0 items-center border-t border-[#dedede] pb-0.5 pl-[3px]">
        <Tools items=": newModel open dlubal cloudModel manager save print v _ report | undo v _ redo v _ | *panelList *panelTable *panelColors console script panelDoc / : lcNew lcEdit" />
        <label className="flex h-6 w-[288px] items-center bg-[#e4effa] pl-1.5 pr-1">
          <span className="bg-[#cc6666] px-2 text-white">GZT</span>
          <span className="w-[75px] self-stretch border-r border-white pl-1.5 leading-6">BS1</span>
          <select aria-label="Bemessungssituation" className="min-w-0 flex-1 appearance-none bg-transparent pl-1.5 outline-none">
            <option>GZT (STR/GEO) - Ständ...</option>
          </select>
          <Chevron />
        </label>
        <Stepper className="ml-px" />
        <Tools items="filterOff v _ eyeDim valDim loadEye loadVal gridEye v *resultEye resultVal | resultGear abacus v" />
        <div className="ml-auto flex items-center self-stretch">
          <Tools items="/ : searchOff _ >>" />
        </div>
      </div>

      <div className="flex h-[35px] shrink-0 items-center border-t border-[#dedede] pb-0.5 pl-[3px]">
        <Tools items=": selRect selEllipse selRing selPoly selPlus / : node v _ line member v _ polyline v _ | support lineSupport surfSupport | dimension v slope _ | surface v _ curved v _ opening v _ solid v cube | nodeLoad lineLoad lineLoadDim surfLoad section v _ freeLoad v _ / : filterWin | frame moment" />
        <div className="ml-auto flex items-center self-stretch">
          <Tools items=">> / :" />
          <Combo label="Koordinatensystem" value="1 - Global XYZ" icon={<span className="ml-0.5 size-3.5 bg-[#ccffff]" />} className="w-[150px]" />
          <Tools items=">> / : tableTri v _ >>" />
        </div>
      </div>

      <div className="flex min-h-0 flex-1">
        <Navigator />
        <main className="flex min-w-0 flex-1 flex-col">
          <div className="relative min-h-0 flex-1 bg-white">
            <ModelView />
            <ControlPanel />
          </div>
          <TableDock />
        </main>
      </div>

      <footer className="flex h-[26px] shrink-0 items-center pl-[342px] pt-0.5">
        {['FANG', 'RASTER', 'LRASTER', 'OFANG'].map((mode) => (
          <button key={mode} className="mr-0.5 h-[22px] border border-[#cfcfcf] bg-[#ececec] px-[5px]">
            {mode}
          </button>
        ))}
        <span className="flex h-[22px] w-[126px] items-center border-r border-[#d4d4d4] pl-0.5">Sichtbarkeitsmodus</span>
        <span className="w-[131px] shrink-0" />
        <span className="flex h-[22px] w-[194px] items-center border-l border-[#d4d4d4] pl-1">KS: Global XYZ</span>
        <span className="flex h-[22px] w-[81px] items-center border-x border-[#d4d4d4] pl-1">Ebene: XY</span>
        <span className="h-[22px] w-[94px] border-r border-[#d4d4d4]" />
        <span className="h-[22px] w-[94px] border-r border-[#d4d4d4]" />
        <span className="h-[22px] w-[94px] border-r border-[#d4d4d4]" />
        <svg viewBox="0 0 12 12" className="ml-auto size-3 self-end" fill="#b0b0b0" aria-hidden="true">
          <path d="M9 1H11V3H9ZM9 5H11V7H9ZM9 9H11V11H9ZM5 5H7V7H5ZM5 9H7V11H5ZM1 9H3V11H1Z" />
        </svg>
      </footer>
    </div>
  );
}
